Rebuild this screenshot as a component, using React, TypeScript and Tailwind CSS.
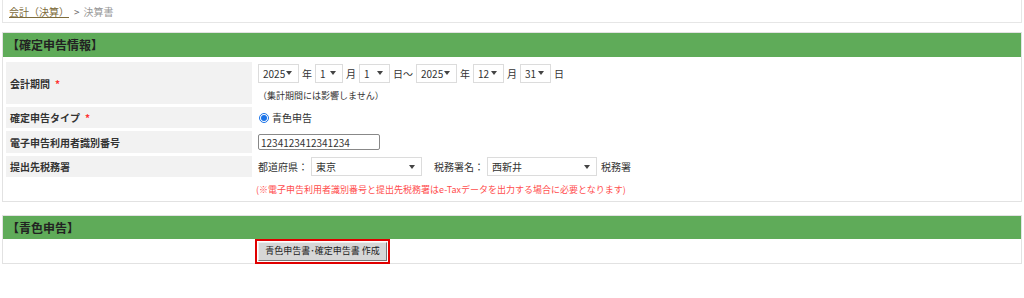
const font = "font-['Meiryo','Noto_Sans_CJK_JP',sans-serif]";

const Caret = () => (
  <span className="w-0 h-0 border-l-[3px] border-r-[3px] border-t-[4px] border-l-transparent border-r-transparent border-t-[#444]" />
);

const Select = ({ value, w }: { value: string; w: string }) => (
  <span
    className={`inline-flex items-center justify-between h-[19px] ${w} border border-[#dcdcdc] bg-white pl-[4px] pr-[6px] text-[10px] text-[#333]`}
  >
    <span>{value}</span>
    <Caret />
  </span>
);

const Label = ({ children, req }: { children: React.ReactNode; req?: boolean }) => (
  <td className="w-[246px] bg-[#f2f2f2] pl-[4px] align-middle text-[10px] font-bold text-[#333]">
    {children}
    {req && <span className="ml-[5px] text-[#ff3333]">*</span>}
  </td>
);

export default function App() {
  return (
    <div className={`${font} bg-white w-[1024px] h-[298px] px-[2px] text-[#333]`}>
      {/* パンくず */}
      <div className="h-[23px] border border-t-0 border-[#e6e6e6] flex items-center pl-[6px] text-[10px]">
        <a className="text-[#7d6b3a] underline decoration-[#7d6b3a]">会計（決算）</a>
        <span className="ml-[5px] text-[#666]">&gt;</span>
        <span className="ml-[4px] text-[#999]">決算書</span>
      </div>

      {/* 確定申告情報 */}
      <div className="mt-[9px] border border-[#e2e2e2]">
        <div className="h-[24px] bg-[#5fab59] flex items-center pl-[4px] text-[12px] font-bold text-[#222]">
          【確定申告情報】
        </div>
        <table className="w-full border-separate border-spacing-x-[3px] border-spacing-y-[3px] mt-[2px]">
          <tbody>
            <tr className="h-[42px]">
              <Label req>会計期間</Label>
              <td className="pl-[3px] text-[10px]">
                <div className="flex items-center gap-[3px]">
                  <Select value="2025" w="w-[41px]" />
                  <span>年</span>
                  <Select value="1" w="w-[28px]" />
                  <span>月</span>
                  <Select value="1" w="w-[31px]" />
                  <span>日～</span>
                  <Select value="2025" w="w-[41px]" />
                  <span>年</span>
                  <Select value="12" w="w-[31px]" />
                  <span>月</span>
                  <Select value="31" w="w-[31px]" />
                  <span>日</span>
                </div>
                <div className="mt-[6px] text-[9px]">（集計期間には影響しません）</div>
              </td>
            </tr>
            <tr className="h-[21px]">
              <Label req>確定申告タイプ</Label>
              <td className="pl-[4px] text-[10px]">
                <span className="flex items-center gap-[3px]">
                  <span className="w-[10px] h-[10px] rounded-full border border-[#1a73e8] flex items-center justify-center">
                    <span className="w-[6px] h-[6px] rounded-full bg-[#1a73e8]" />
                  </span>
                  青色申告
                </span>
              </td>
            </tr>
            <tr className="h-[22px]">
              <Label>電子申告利用者識別番号</Label>
              <td className="pl-[3px]">
                <div className="w-[122px] h-[16px] border border-[#888] rounded-[2px] flex items-center px-[2px] text-[10px]">
                  1234123412341234
                </div>
              </td>
            </tr>
            <tr className="h-[21px]">
              <Label>提出先税務署</Label>
              <td className="pl-[3px] text-[10px]">
                <div className="flex items-center">
                  <span>都道府県：</span>
                  <span className="ml-[3px] flex"><Select value="東京" w="w-[111px]" /></span>
                  <span className="ml-[12px]">税務署名：</span>
                  <span className="ml-[3px] flex"><Select value="西新井" w="w-[110px]" /></span>
                  <span className="ml-[4px]">税務署</span>
                </div>
              </td>
            </tr>
            <tr className="h-[18px]">
              <td />
              <td className="pl-[1px] pt-[3px] text-[9px] text-[#ff4d4d] align-top">
                (※電子申告利用者識別番号と提出先税務署はe-Taxデータを出力する場合に必要となります)
              </td>
            </tr>
          </tbody>
        </table>
      </div>

      {/* 青色申告 */}
      <div className="mt-[13px] border border-[#e2e2e2]">
        <div className="h-[23px] bg-[#5fab59] flex items-center pl-[4px] text-[12px] font-bold text-[#222]">
          【青色申告】
        </div>
        <div className="h-[24px] flex items-center pl-[255px]">
          <button className="h-[19px] w-[129px] whitespace-nowrap bg-[#d6d6d6] border border-t-[#eee] border-l-[#eee] border-r-[#777] border-b-[#777] text-[9px] text-[#222] outline-2 outline-[#e00000] outline-offset-[1px]">
            青色申告書･確定申告書 作成
          </button>
        </div>
      </div>
    </div>
  );
}
